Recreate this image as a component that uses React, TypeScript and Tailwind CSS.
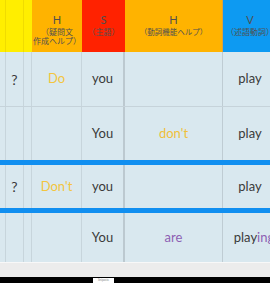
import React from "react";

const font = { fontFamily: "Lato, 'Noto Sans CJK JP', sans-serif" };

function Row({
  h,
  q,
  hText,
  hClass,
  s,
  h2,
  h2Class,
  v,
  border,
}: {
  h: string;
  q?: string;
  hText?: string;
  hClass?: string;
  s: string;
  h2?: string;
  h2Class?: string;
  v: React.ReactNode;
  border?: boolean;
}) {
  return (
    <div className={`flex ${h} shrink-0 bg-[#d9e8ef] text-[13px] text-[#3a3a3a] ${border ? "border-b border-[#c6d3da]" : ""}`}>
      <div className="w-[6px] shrink-0 border-r border-[#c7d5dc]" />
      <div className="w-[18px] shrink-0 border-r border-[#c7d5dc] flex items-center justify-center text-[14px]">{q}</div>
      <div className="w-[8px] shrink-0 border-r border-[#c7d5dc]" />
      <div className={`w-[50px] shrink-0 border-r border-[#c7d5dc] flex items-center justify-center ${hClass ?? ""}`}>{hText}</div>
      <div className="w-[43px] shrink-0 border-r-2 border-[#bcc9d0] flex items-center justify-center">{s}</div>
      <div className={`w-[98px] shrink-0 border-r border-[#bfccd3] flex items-center justify-center ${h2Class ?? ""}`}>{h2}</div>
      <div className="w-[54px] shrink-0 flex items-center justify-center">{v}</div>
    </div>
  );
}

export default function App() {
  return (
    <div className="w-[270px] h-[283px] overflow-hidden flex flex-col bg-black" style={font}>
      <div className="flex h-[52px] shrink-0 text-[#505050]">
        <div className="w-[6px] shrink-0 bg-[#ffee00] border-r border-[#f0dc00]" />
        <div className="w-[18px] shrink-0 bg-[#ffee00] border-r border-[#f0dc00]" />
        <div className="w-[8px] shrink-0 bg-[#ffee00]" />
        <div className="w-[50px] shrink-0 bg-[#ffb300] flex flex-col items-center pt-[12px]">
          <div className="text-[11px] leading-[16px]">H</div>
          <div className="text-[8px] leading-[9px] text-center whitespace-nowrap">（疑問文<br />作成ヘルプ）</div>
        </div>
        <div className="w-[43px] shrink-0 bg-[#ff2200] flex flex-col items-center pt-[12px]">
          <div className="text-[11px] leading-[16px]">S</div>
          <div className="text-[8px] leading-[9px] whitespace-nowrap">（主語）</div>
        </div>
        <div className="w-[98px] shrink-0 bg-[#ffb300] border-r border-[#d9a040] flex flex-col items-center pt-[12px]">
          <div className="text-[11px] leading-[16px]">H</div>
          <div className="text-[7.5px] leading-[9px] whitespace-nowrap">（動詞機能ヘルプ）</div>
        </div>
        <div className="w-[54px] shrink-0 bg-[#0d9af2] flex flex-col items-center pt-[12px]">
          <div className="text-[11px] leading-[16px]">V</div>
          <div className="text-[8px] leading-[9px] whitespace-nowrap">（述語動詞）</div>
        </div>
      </div>
      <Row h="h-[55px]" border q="?" hText="Do" hClass="text-[#f3c53e]" s="you" v="play" />
      <Row h="h-[53px]" s="You" h2="don't" h2Class="text-[#f0c03a]" v="play" />
      <div className="h-[5px] shrink-0 bg-[#118ff0]" />
      <Row h="h-[43px]" q="?" hText="Don't" hClass="text-[#f3c53e]" s="you" v="play" />
      <div className="h-[5px] shrink-0 bg-[#118ff0]" />
      <Row
        h="h-[49px]"
        s="You"
        h2="are"
        h2Class="text-[#8d5fb3]"
        v={
          <span className="whitespace-nowrap pl-[8px]">
            play<span className="text-[#8d5fb3]">ing</span>
          </span>
        }
      />
      <div className="h-[15px] shrink-0 bg-[#ececec] border-t border-[#f8f8f8]" />
      <div className="h-[6px] shrink-0 bg-black relative">
        <div className="absolute left-[93px] top-[1px] w-[21px] h-[5px] bg-white text-[3px] text-[#888] leading-[5px] text-center overflow-hidden">
          Snipaste
        </div>
      </div>
    </div>
  );
}
